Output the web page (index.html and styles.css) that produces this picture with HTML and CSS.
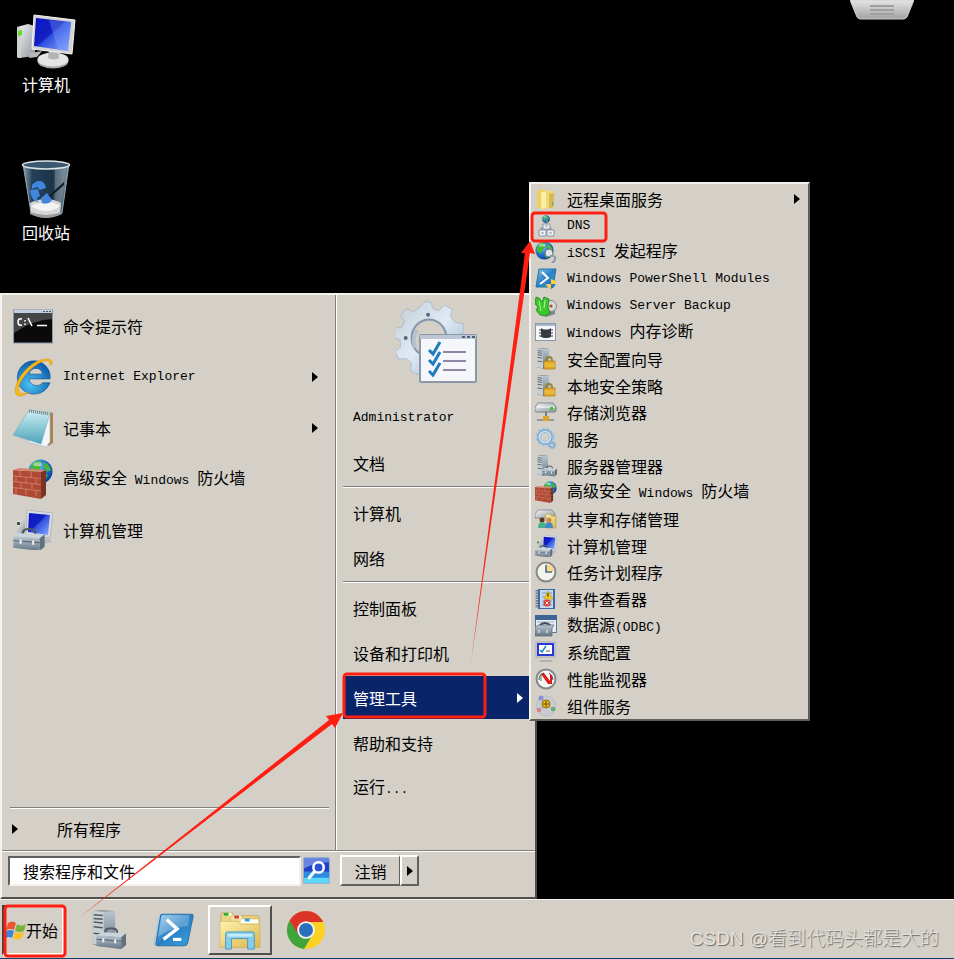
FILE: index.html
```html
<!DOCTYPE html>
<html lang="zh-CN">
<head>
    <meta charset="UTF-8">
    <meta name="viewport" content="width=device-width, initial-scale=1.0">
    <title>开始菜单 - 管理工具 - DNS</title>
    <link rel="stylesheet" href="styles.css">
</head>
<body>

    <!-- Shared icon symbols -->
    <svg class="sprites" aria-hidden="true">
        <defs>
            <linearGradient id="screen" x1="0" y1="0" x2="1" y2="1">
                <stop offset="0" stop-color="#0a16c8"/><stop offset=".45" stop-color="#1420c0"/>
                <stop offset=".5" stop-color="#3050e0"/><stop offset="1" stop-color="#8cacff"/>
            </linearGradient>
            <linearGradient id="metal" x1="0" y1="0" x2="1" y2="1">
                <stop offset="0" stop-color="#f4f5f6"/><stop offset="1" stop-color="#8f979e"/>
            </linearGradient>
            <linearGradient id="steel" x1="0" y1="0" x2="0" y2="1">
                <stop offset="0" stop-color="#b9c6d0"/><stop offset="1" stop-color="#647684"/>
            </linearGradient>
            <linearGradient id="psBlue" x1="0" y1="0" x2="1" y2="1">
                <stop offset="0" stop-color="#8ccaf0"/><stop offset=".5" stop-color="#2a80c4"/><stop offset="1" stop-color="#3aa4dc"/>
            </linearGradient>
            <linearGradient id="gold" x1="0" y1="0" x2="1" y2="1">
                <stop offset="0" stop-color="#fdf3b0"/><stop offset="1" stop-color="#dcb64a"/>
            </linearGradient>
            <linearGradient id="note" x1="0" y1="0" x2="0" y2="1">
                <stop offset="0" stop-color="#cfeef4"/><stop offset="1" stop-color="#4ca4ba"/>
            </linearGradient>
            <linearGradient id="glass" x1="0" y1="0" x2="1" y2="0">
                <stop offset="0" stop-color="#8ea2b2"/><stop offset=".2" stop-color="#24405a"/>
                <stop offset=".65" stop-color="#1e3448"/><stop offset="1" stop-color="#8496a4"/>
            </linearGradient>
            <radialGradient id="earth" cx=".35" cy=".3" r=".75">
                <stop offset="0" stop-color="#bfeaff"/><stop offset=".4" stop-color="#2f86e0"/><stop offset="1" stop-color="#0a3a94"/>
            </radialGradient>
            <radialGradient id="ieBlue" cx=".4" cy=".7" r=".7">
                <stop offset="0" stop-color="#4cc4f4"/><stop offset="1" stop-color="#0c5cac"/>
            </radialGradient>
            <linearGradient id="gearBlue" x1="0" y1="0" x2="1" y2="1">
                <stop offset="0" stop-color="#c4cdd6"/><stop offset=".5" stop-color="#dfeaf4"/><stop offset="1" stop-color="#8db0cc"/>
            </linearGradient>
        </defs>

        <symbol id="i-computer" viewBox="0 0 60 60">
            <path d="M1 15l11-3 7 2v30L3 46q-2 0-2-2z" fill="url(#metal)"/>
            <path d="M1 15l4 1v30l-2 0q-2 0-2-2z" fill="#cfd0d0"/>
            <path d="M2 19l4-1v5l-4 1z" fill="#58e020"/>
            <path d="M14 41l12-2-5 6-8 1z" fill="#b9b9b9"/>
            <ellipse cx="37" cy="49" rx="15.500" ry="7.500" fill="#a9a9a9"/>
            <ellipse cx="37" cy="47.500" rx="15.500" ry="7" fill="#e4e4e4"/>
            <path d="M33 37h9l1 9q-5 3-11 0z" fill="#b4b4b4"/>
            <path d="M18 3l41 5-3 34-40-5z" fill="#d6d4d0" stroke="#f6f6f6"/>
            <path d="M20 6l35 4-3 29-34-5z" fill="url(#screen)"/>
            <path d="M33 8l22 2-3 29-10-1z" fill="#7ea4ff" opacity=".35"/>
        </symbol>
        <symbol id="i-bin" viewBox="0 0 60 60">
            <path d="M7 4h46l-7 49q-16 8-31 0z" fill="url(#glass)" stroke="#93a4b0"/>
            <path d="M39 8h11l-6 44-6 2z" fill="#8fa0ac" opacity=".45"/>
            <path d="M30 38l18-16v3L32 39z" fill="#10202c"/>
            <path d="M14 43q16-8 31 0l-1 11q-14 7-29 0z" fill="#d6d6d6"/>
            <path d="M15 46q8-5 14-2 7-4 15 2-6 5-14 5T15 46z" fill="#f3f3f3"/>
            <path d="M14 52q16 6 32 0v2q-16 8-32 0z" fill="#9b9b9b"/>
            <path d="M16 25q5-6 11-3 3 3 3 6l-6 2-3-3-5 2zM14 30l8-1 2 7-3 2q0 4 2 5-8-2-9-13zM25 38l6-5 5 7q-3 5-10 3z" fill="#3f86dc"/>
            <ellipse cx="30" cy="5" rx="23.500" ry="4" fill="#3c5870" stroke="#dfe4e8" stroke-width="1.500"/>
        </symbol>
        <symbol id="i-cmd" viewBox="0 0 40 40">
            <rect x=".5" y="4" width="39" height="33" fill="#0a0a0a" stroke="#8a98a8"/>
            <rect x="1" y="4" width="38" height="3" fill="#c2cfdf"/>
            <path d="M30 5.500h2m1 0h2m1 0h2" stroke="#3f5878"/>
            <path d="M1 7h38v6Q20 14 1 27z" fill="#777" opacity=".55"/>
            <path d="M9 13q-4-1-4 3t4 3M12 14v1.500m0 2v1.500M15 12l4 8M24 19.500h10" fill="none" stroke="#fff" stroke-width="1.600"/>
        </symbol>
        <symbol id="i-ie" viewBox="0 0 42 42">
            <path d="M22 4a17 17 0 0 1 17 19H17q1 7 8 7 4 0 6-3h8Q34 39 22 39A17 17 0 1 1 22 4zm-5 14h14q-1-6-7-6t-7 6z" fill="url(#ieBlue)" stroke="#0b4e94" stroke-width=".6"/>
            <path d="M41 7Q42 2 35 2 20 3 8 20-1 35 4 40q4 3 13-3-8 3-10 0-4-5 5-17Q22 7 34 4q5-1 5 5z" fill="#f9b812" stroke="#d68e08" stroke-width=".5"/>
        </symbol>
        <symbol id="i-notepad" viewBox="0 0 40 40">
            <path d="M36 4l4 1v30l-5 3z" fill="#a98450"/>
            <path d="M32 4l5-1v31l-4 5-18-5z" fill="#f2f6f8" stroke="#9aabb4" stroke-width=".5"/>
            <path d="M16 2l21 3-9 31L0 27z" fill="url(#note)" stroke="#66a4b0" stroke-width=".5"/>
            <path d="M16 3l20 3" stroke="#78807f" stroke-width="3" stroke-dasharray="1 1"/>
        </symbol>
        <symbol id="i-globe" viewBox="0 0 24 24">
            <circle cx="12" cy="12" r="11.500" fill="url(#earth)"/>
            <path d="M3 6q5-6 10-4l-2 4 2 2-4 5-2 3-5-3zM15 3q6 2 7 8l-4 1-3-4zM13 14l6 1-3 7-4-3z" fill="#46b83a"/>
            <ellipse cx="9" cy="5" rx="4" ry="2" fill="#fff" opacity=".45"/>
        </symbol>
        <symbol id="i-firewall" viewBox="0 0 40 40">
            <use href="#i-globe" x="15" y="0" width="25" height="25"/>
            <path d="M28 13l5-2v25l-5 4z" fill="#793522"/>
            <path d="M0 11l28 2v27L0 35z" fill="#b04a36"/>
            <path d="M0 17l28 2.500m-28 3l28 3m-28 3l28 3.500M7 12v6m11-5v6M3 18v5m10-4v5m10-4v5M8 24v5m11-4v5M3 29v6m10-5v6m10-5v6" stroke="#d8907a" stroke-width=".7"/>
            <path d="M0 11l28 2 5-2-27-2z" fill="#d88570"/>
        </symbol>
        <symbol id="i-toolbox" viewBox="0 0 30 22">
            <path d="M9 8V5q0-4 6-4t6 4v3" fill="none" stroke="#4c5962" stroke-width="2"/>
            <path d="M0 8l6-3 24 1-5 4z" fill="#cbd4da"/>
            <path d="M25 10l5-4v12l-5 4z" fill="#60707c"/>
            <path d="M0 8l25 2v12L0 19z" fill="url(#steel)"/>
            <path d="M0 12l25 2" stroke="#536470"/>
            <path d="M6 11h2v4H6zM18 12h2v4h-2z" fill="#eef2f4"/>
        </symbol>
        <symbol id="i-manage" viewBox="0 0 40 40">
            <path d="M4 11l8-2v14H4z" fill="url(#metal)"/>
            <path d="M4 12h3v3H4z" fill="#3c5a3c"/>
            <path d="M14 0l26 3-3 25-24-3z" fill="#d8dce2" stroke="#9ba3ac" stroke-width=".6"/>
            <path d="M16 3l21 2-2 20-20-3z" fill="url(#screen)"/>
            <path d="M27 29h10l2 3-8 2z" fill="#b8bcc0"/>
            <use href="#i-toolbox" x="0" y="18" width="32" height="23"/>
        </symbol>
        <symbol id="i-gear" viewBox="0 0 70 76">
            <path fill-rule="evenodd" d="M29 1h7l2 7 6 2 6-6 8 5-2 7 5 6 8 1 1 9-7 4v8l5 6-4 9-8-1-6 6-1 8-9 3-5-6h-6l-5 7-9-4 1-8-5-5-8 1-4-8 6-5-1-7-7-3 1-9 8-1 3-6-4-6 6-7 7 3 6-4zM34 20a17 18 0 1 0 0 36 17 18 0 0 0 0-36z" fill="url(#gearBlue)" stroke="#a4b6c6" stroke-width=".8"/>
            <ellipse cx="34" cy="38" rx="18" ry="19" fill="none" stroke="#8696a8" stroke-width="2"/>
            <path d="M20 48q-4-10 2-18" fill="none" stroke="#b4c2d0" stroke-width="4"/>
            <circle cx="33" cy="14" r="2" fill="#53677c"/><circle cx="10" cy="38" r="2" fill="#53677c"/>
        </symbol>
        <symbol id="i-admin" viewBox="0 0 84 84">
            <use href="#i-gear" x="1" y="0" width="68" height="74"/>
            <rect x="25" y="34" width="56" height="47" rx="1" fill="#f6f7fa" stroke="#8c97a8" stroke-width="2"/>
            <path d="M25 34h56v4H25z" fill="#bcc7d6"/>
            <path d="M67 36h3m2 0h3m2 0h3" stroke="#4c5e78" stroke-width="2"/>
            <path d="M48 51h23M48 60h23M48 69h23" stroke="#8c87a4" stroke-width="2"/>
            <path d="M34 49l4 4 7-12M34 59l4 4 7-12M34 70l4 4 7-12" fill="none" stroke="#1c7cc0" stroke-width="3"/>
        </symbol>
        <symbol id="i-search" viewBox="0 0 26 26">
            <rect x=".5" y=".5" width="25" height="25" rx="2" fill="#2040c8" stroke="#9ab0d0"/>
            <path d="M1 14h24v11H1z" fill="#2c8ce0"/><path d="M1 20h24v5H1z" fill="#5cd8f8"/>
            <path d="M1 1h24v4Q12 5 1 11z" fill="#9ab4f4" opacity=".6"/>
            <circle cx="15" cy="10" r="5" fill="#2c50d8" stroke="#fff" stroke-width="2.400"/>
            <path d="M11 14l-5 6" stroke="#fff" stroke-width="3" stroke-linecap="round"/>
        </symbol>
        <symbol id="i-flag" viewBox="0 0 20 20">
            <path d="M2 3q4-3 8 0L8 10Q5 8 0 10z" fill="#e8582c"/>
            <path d="M11 4q4 3 9 0l-2 7q-5 2-9 0z" fill="#78b43c"/>
            <path d="M0 11q4-2 8 0l-2 7q-3-2-6 0z" fill="#3c84d8"/>
            <path d="M9 12q4 2 9 0l-2 6q-5 3-9 0z" fill="#f8c024"/>
        </symbol>
        <symbol id="i-server" viewBox="0 0 20 40" preserveAspectRatio="none">
            <path d="M0 1l8-1 12 1v36l-9 3-11-3z" fill="#8f989c"/>
            <path d="M0 1l10 1v37L0 36z" fill="#c9d0d4"/>
            <path d="M1 5l8 1M1 9l8 1M1 13l8 1M1 18l8 1M1 25l8 1" stroke="#4f5c66" stroke-width="1.600"/>
            <path d="M10 2l10-1v36l-10 2z" fill="url(#steel)"/>
        </symbol>
        <symbol id="i-srvmgr" viewBox="0 0 40 44">
            <use href="#i-server" x="3" y="0" width="25" height="41"/>
            <use href="#i-toolbox" x="7" y="19" width="33" height="24"/>
        </symbol>
        <symbol id="i-ps" viewBox="0 0 40 32">
            <path d="M0 29L5 4l3-3h4L5 31H2z" fill="#9cc4e4" opacity=".6"/>
            <path d="M9 1h27q3 0 2 3l-5 24q-1 3-4 3H5q-3 0-2-3L7 4q0-3 2-3z" fill="url(#psBlue)" stroke="#2870a8"/>
            <path d="M9 2h26l-2 10Q18 14 5 22L8 5z" fill="#fff" opacity=".25"/>
            <path d="M13 6l10 9-13 10" fill="none" stroke="#fff" stroke-width="3.200"/>
            <path d="M19 25h8" stroke="#fff" stroke-width="3"/>
        </symbol>
        <symbol id="i-explorer" viewBox="0 0 44 40">
            <path d="M2 4q0-2 2-2h10l2 3h24q2 0 2 2v31H2z" fill="#ead486" stroke="#c0a04c" stroke-width=".8"/>
            <path d="M12 7q0-2 2-2h9l2 3h17v30H12z" fill="#f1de94" stroke="#c8ac58" stroke-width=".6"/>
            <path d="M23 9h18v4H23z" fill="#fff"/>
            <path d="M5 2h8v3H5zM15 5h8v3h-8z" fill="#fff"/>
            <path d="M5 2h5v3H5z" fill="#22b422"/><path d="M16 5h5v3h-5z" fill="#d83c28"/><path d="M27 8h5v3h-5z" fill="#2c9ce4"/>
            <path d="M1 11h19l2 3h21v24H1z" fill="url(#gold)" stroke="#ceb058" stroke-width=".6"/>
            <path d="M7 40V24q0-2 2-2h26q2 0 2 2v16h-7V29H13v11z" fill="#86cdec" stroke="#4898c4"/>
            <path d="M9 24h26v3H9z" fill="#d4f2fc" opacity=".8"/>
        </symbol>
        <symbol id="i-chrome" viewBox="0 0 40 40">
            <circle cx="20" cy="20" r="19" fill="#fcd124"/>
            <path d="M3.500 10.500A19 19 0 0 0 18 39l9-15-14 0z" fill="#40a43c"/>
            <path d="M3.500 10.500L12 24l8-12h17.200l-.7-1.500a19 19 0 0 0-33 0z" fill="#dc3228"/>
            <circle cx="20" cy="20" r="8.800" fill="#f4f4f0"/>
            <circle cx="20" cy="20" r="7" fill="#2c70bc"/>
        </symbol>

        <!-- 22px menu icons -->
        <symbol id="i-folder" viewBox="0 0 22 22">
            <path d="M2 3l5-2 4 2v17l-5 1-4-2z" fill="#ecd060"/>
            <path d="M11 3l5-1 3 3v14l-6 2-3-1z" fill="#f0d878"/>
            <path d="M6 4l5-1v17l-5 1z" fill="#fbeea8"/><path d="M14 6l5-1v14l-5 1z" fill="#d8b850"/>
            <path d="M17 14h1v3h-1z" fill="#48a8c8"/>
        </symbol>
        <symbol id="i-dns" viewBox="0 0 22 22">
            <path d="M11 7v4M6 16v-3h10v3" stroke="#788898" fill="none"/>
            <use href="#i-globe" x="7" y="0" width="8" height="8"/>
            <path d="M8 9h7v5H8zM4 15h7v6H4zM12 15h7v6h-7z" fill="#eef1f6" stroke="#8793a4"/>
            <path d="M10 11h3M6 18h3M14 18h3" stroke="#8793a4"/>
        </symbol>
        <symbol id="i-iscsi" viewBox="0 0 22 22">
            <use href="#i-globe" x="0" y="0" width="19" height="19"/>
            <circle cx="14" cy="12" r="4" fill="#dfe5ea" stroke="#68747e"/>
            <path d="M15 15q6-1 5 3t-3 3" fill="none" stroke="#8a98a2" stroke-width="2"/>
        </symbol>
        <symbol id="i-shield" viewBox="0 0 10 10">
            <path d="M5 0l5 2q0 6-5 8Q0 8 0 2z" fill="#2c74d0"/>
            <path d="M5 0l5 2v3H5zM5 5v5Q1 9 0 5z" fill="#f8d434"/>
        </symbol>
        <symbol id="i-psmod" viewBox="0 0 22 22">
            <path d="M4 1h17l-3 18H1z" fill="url(#psBlue)" stroke="#2870a8"/>
            <path d="M7 4l6 6-8 6" fill="none" stroke="#fff" stroke-width="2"/>
            <use href="#i-shield" x="11" y="11" width="10" height="10"/>
        </symbol>
        <symbol id="i-backup" viewBox="0 0 22 22">
            <path d="M7 13l13-2v8l-9 3-4-3z" fill="#7c868c"/>
            <circle cx="16" cy="11" r="5.500" fill="#d6d8da" stroke="#888"/><circle cx="16" cy="11" r="1.600" fill="#a0522c"/>
            <path d="M1 2l3 1 3 4 2-5 5 2-1 8 2 6-5 3-5-1-4-5 2-3-3-3z" fill="#3cc82c" stroke="#1c8818" stroke-width=".8"/>
            <path d="M4 6l2 10M10 5l-1 8" stroke="#b4f4a0" fill="none"/>
        </symbol>
        <symbol id="i-memory" viewBox="0 0 22 22">
            <rect x=".5" y="2.500" width="20" height="17" fill="#f6f7f8" stroke="#8a98a8"/>
            <path d="M1 3h19v2H1z" fill="#a8b8cc"/>
            <path d="M6 7l3 2h4l3-2v9l-3 1H9l-3-1z" fill="#383c40"/>
            <path d="M4 9h14M4 12h14M4 15h14" stroke="#383c40"/>
        </symbol>
        <symbol id="i-lock" viewBox="0 0 22 22">
            <use href="#i-server" x="2" y="0" width="12" height="21"/>
            <path d="M11 14v-2q0-3 3-3t3 3v2" fill="none" stroke="#98803c" stroke-width="1.800"/>
            <rect x="9" y="13" width="11" height="8" fill="#e4a824" stroke="#a87c14" stroke-width=".7"/>
            <path d="M9 16h11M9 18h11" stroke="#f8d870" stroke-width=".6"/>
        </symbol>
        <symbol id="i-storage" viewBox="0 0 22 22">
            <path d="M3 2h15l3 4v4q0 1-2 1H2q-2 0-2-1V6z" fill="url(#metal)" stroke="#68727a" stroke-width=".8"/>
            <path d="M2 6h18" stroke="#fff"/><path d="M15 6h3v3h-3z" fill="#38c828"/>
            <path d="M11 11v6" stroke="#707c84" stroke-width="2"/><path d="M2 19h17" stroke="#7c8890" stroke-width="1.500"/>
            <rect x="8" y="15" width="6" height="5" fill="#e0a428"/>
        </symbol>
        <symbol id="i-services" viewBox="0 0 22 22">
            <circle cx="10" cy="9" r="6" fill="none" stroke="#7eabcf" stroke-width="4"/>
            <circle cx="10" cy="9" r="8.500" fill="none" stroke="#9cc0dc" stroke-width="2" stroke-dasharray="2.600 2"/>
            <circle cx="10" cy="9" r="5.500" fill="none" stroke="#d0e4f2" stroke-width="1.600"/>
            <circle cx="17" cy="17" r="2.500" fill="none" stroke="#8cb4d0" stroke-width="2.500"/>
            <circle cx="17" cy="17" r="4" fill="none" stroke="#a8c8de" stroke-dasharray="1.500 1.500"/>
        </symbol>
        <symbol id="i-srvtool" viewBox="0 0 22 22">
            <use href="#i-server" x="2" y="0" width="11" height="21"/>
            <use href="#i-toolbox" x="7" y="10" width="15" height="12"/>
        </symbol>
        <symbol id="i-share" viewBox="0 0 22 22">
            <path d="M3 2h14l3 4v4H0V6z" fill="url(#metal)" stroke="#7c868e" stroke-width=".8"/>
            <path d="M11 6h4l1 2h5v12H11z" fill="url(#gold)" stroke="#c09c40" stroke-width=".7"/>
            <circle cx="7" cy="12" r="2.500" fill="#5a3a1c"/><circle cx="14" cy="12" r="2.500" fill="#c8894c"/>
            <path d="M3 20q0-6 4-6t4 6z" fill="#46b088"/><path d="M10 20q0-6 4-6t4 6z" fill="#4488c4"/>
        </symbol>
        <symbol id="i-clock" viewBox="0 0 22 22">
            <circle cx="11" cy="11" r="9.500" fill="#f3f3ee" stroke="#83888c" stroke-width="2"/>
            <path d="M11 11V3a8 8 0 0 1 8 8z" fill="#f8d890"/>
            <path d="M11 4v7h6" fill="none" stroke="#4c6880" stroke-width="1.600"/>
        </symbol>
        <symbol id="i-event" viewBox="0 0 22 22">
            <rect x="3" y="1" width="17" height="20" fill="#3c68a8"/>
            <path d="M5 2h13v18H5z" fill="#c6d8ee"/>
            <path d="M2 2v18" stroke="#6c7888" stroke-width="3" stroke-dasharray="1.500 1"/>
            <path d="M7 5h10M7 9h10M7 13h10M7 17h10" stroke="#7c98c0"/>
            <path d="M13 3l5 8H9z" fill="#f8d024" stroke="#b8920c" stroke-width=".6"/><path d="M13 5v4" stroke="#222"/>
            <circle cx="12" cy="15" r="3.600" fill="#dc3c34"/><path d="M10.500 13.500l3 3m0-3l-3 3" stroke="#fff"/>
        </symbol>
        <symbol id="i-odbc" viewBox="0 0 22 22">
            <rect x=".5" y=".5" width="21" height="17" fill="#e8eef4" stroke="#5878a0"/>
            <path d="M0 0h22v5H0z" fill="#3c6494"/><path d="M2 7h17" stroke="#9cb0c8"/>
            <path d="M4 11q6-6 12 0" fill="none" stroke="#444f58" stroke-width="2"/>
            <path d="M0 12l4-2h15l-2 3v8H0z" fill="url(#steel)" stroke="#586874" stroke-width=".7"/>
            <path d="M4 15v3M12 15v3" stroke="#fff"/>
        </symbol>
        <symbol id="i-config" viewBox="0 0 22 22">
            <path d="M6 19h10l2 2H4z" fill="#b0b2b4"/>
            <rect x="1" y="1" width="19" height="15" fill="#dcdcde" stroke="#a4a8b0"/>
            <rect x="3" y="3" width="15" height="11" fill="#fff" stroke="#2838d4" stroke-width="2"/>
            <path d="M5 9l2 2 4-6" fill="none" stroke="#1c8cc4" stroke-width="1.600"/><path d="M11 10h4" stroke="#555"/>
        </symbol>
        <symbol id="i-perf" viewBox="0 0 22 22">
            <circle cx="11" cy="11" r="9.500" fill="#f6f6f4" stroke="#83888c" stroke-width="2"/>
            <path d="M4 12q0-6 5-7M14 5q4 2 4 7" stroke="#546" fill="none"/>
            <path d="M6 6l3-1 6 8V7h2v9h-4z" fill="#dc1c1c"/><path d="M6 6v7" stroke="#3a8c3a"/>
        </symbol>
        <symbol id="i-component" viewBox="0 0 22 22">
            <circle cx="11" cy="11" r="10" fill="#c8cbd0" stroke="#b2b4ba" stroke-width=".6"/>
            <circle cx="6" cy="3" r="2.500" fill="#8c8cd8"/><circle cx="4" cy="15" r="2.200" fill="#e07c88"/><circle cx="18" cy="14" r="2.200" fill="#58b058"/>
            <path d="M6 3l5 6-7 6m7-6l7 5" stroke="#a4a4ac" fill="none"/>
            <circle cx="11" cy="9" r="4" fill="#e8b81c" stroke="#94700c"/><path d="M11 6v6M8 9h6" stroke="#6c500c"/>
        </symbol>
    </svg>

    <main class="desktop">
        <div class="desktop-icon">
            <svg><use href="#i-computer"/></svg>
            <span>计算机</span>
        </div>
        <div class="desktop-icon">
            <svg><use href="#i-bin"/></svg>
            <span>回收站</span>
        </div>

        <svg class="session-tab" viewBox="0 0 64 20">
            <defs>
                <linearGradient id="tab" x1="0" y1="0" x2="0" y2="1">
                    <stop offset="0" stop-color="#e6e6e6"/><stop offset="1" stop-color="#a2a2a2"/>
                </linearGradient>
            </defs>
            <path d="M0 0h64l-7 17q-1 2-4 2H11q-3 0-4-2z" fill="url(#tab)" stroke="#d0d0d0"/>
            <path d="M20 6h24M20 10h24M20 14h24" stroke="#a0a0a0" stroke-width="2"/>
        </svg>

        <!-- Start menu -->
        <nav class="start-menu">
            <div class="columns">
                <div class="programs">
                    <a href="#" class="program"><svg><use href="#i-cmd"/></svg><span>命令提示符</span></a>
                    <a href="#" class="program more"><svg><use href="#i-ie"/></svg><span class="en">Internet Explorer</span></a>
                    <a href="#" class="program more"><svg><use href="#i-notepad"/></svg><span>记事本</span></a>
                    <a href="#" class="program"><svg><use href="#i-firewall"/></svg><span>高级安全<span class="en"> Windows </span>防火墙</span></a>
                    <a href="#" class="program"><svg><use href="#i-manage"/></svg><span>计算机管理</span></a>
                    <a href="#" class="all-programs">所有程序</a>
                </div>

                <div class="places">
                    <svg class="avatar"><use href="#i-admin"/></svg>
                    <a href="#" class="place"><span class="en">Administrator</span></a>
                    <a href="#" class="place">文档</a>
                    <hr>
                    <a href="#" class="place">计算机</a>
                    <a href="#" class="place">网络</a>
                    <hr>
                    <a href="#" class="place">控制面板</a>
                    <a href="#" class="place">设备和打印机</a>
                    <a href="#" class="place more active">管理工具</a>
                    <a href="#" class="place">帮助和支持</a>
                    <a href="#" class="place"><span>运行<span class="en">...</span></span></a>
                </div>
            </div>

            <div class="menu-footer">
                <input type="text" class="search" placeholder="搜索程序和文件" aria-label="搜索程序和文件">
                <button class="search-button" aria-label="搜索"><svg><use href="#i-search"/></svg></button>
                <button class="logoff">注销</button>
                <button class="logoff-more more" aria-label="更多"></button>
            </div>

            <!-- Administrative tools -->
            <div class="submenu">
                <a href="#" class="more"><svg><use href="#i-folder"/></svg><span>远程桌面服务</span></a>
                <a href="#"><svg><use href="#i-dns"/></svg><span class="en">DNS</span></a>
                <a href="#"><svg><use href="#i-iscsi"/></svg><span><span class="en">iSCSI </span>发起程序</span></a>
                <a href="#"><svg><use href="#i-psmod"/></svg><span class="en">Windows PowerShell Modules</span></a>
                <a href="#"><svg><use href="#i-backup"/></svg><span class="en">Windows Server Backup</span></a>
                <a href="#"><svg><use href="#i-memory"/></svg><span><span class="en">Windows </span>内存诊断</span></a>
                <a href="#"><svg><use href="#i-lock"/></svg><span>安全配置向导</span></a>
                <a href="#"><svg><use href="#i-lock"/></svg><span>本地安全策略</span></a>
                <a href="#"><svg><use href="#i-storage"/></svg><span>存储浏览器</span></a>
                <a href="#"><svg><use href="#i-services"/></svg><span>服务</span></a>
                <a href="#"><svg><use href="#i-srvtool"/></svg><span>服务器管理器</span></a>
                <a href="#"><svg><use href="#i-firewall"/></svg><span>高级安全<span class="en"> Windows </span>防火墙</span></a>
                <a href="#"><svg><use href="#i-share"/></svg><span>共享和存储管理</span></a>
                <a href="#"><svg><use href="#i-manage"/></svg><span>计算机管理</span></a>
                <a href="#"><svg><use href="#i-clock"/></svg><span>任务计划程序</span></a>
                <a href="#"><svg><use href="#i-event"/></svg><span>事件查看器</span></a>
                <a href="#"><svg><use href="#i-odbc"/></svg><span>数据源<span class="en">(ODBC)</span></span></a>
                <a href="#"><svg><use href="#i-config"/></svg><span>系统配置</span></a>
                <a href="#"><svg><use href="#i-perf"/></svg><span>性能监视器</span></a>
                <a href="#"><svg><use href="#i-component"/></svg><span>组件服务</span></a>
            </div>
        </nav>
    </main>

    <footer class="taskbar">
        <button class="start-button"><svg><use href="#i-flag"/></svg>开始</button>
        <button class="task" aria-label="服务器管理器"><svg><use href="#i-srvmgr"/></svg></button>
        <button class="task" aria-label="PowerShell"><svg><use href="#i-ps"/></svg></button>
        <button class="task open" aria-label="资源管理器"><svg><use href="#i-explorer"/></svg></button>
        <button class="task" aria-label="Chrome"><svg><use href="#i-chrome"/></svg></button>
        <span class="watermark">CSDN @看到代码头都是大的</span>
    </footer>

    <!-- Red boxes and arrows -->
    <svg class="marks" viewBox="0 0 954 959">
        <g fill="none" stroke="#ff1e12" stroke-width="3">
            <rect x="5" y="906" width="60" height="50" rx="3"/>
            <rect x="344" y="674" width="141" height="43" rx="3"/>
            <rect x="532" y="213" width="74" height="28" rx="3"/>
        </g>
        <g fill="#ff1e12">
            <path d="M76 920L329 720l-3-4 17-3-8 15-3-4z"/>
            <path d="M471 662L525 253l-4 0 9-12 5 13-5-1z"/>
        </g>
    </svg>

</body>
</html>
```
FILE: styles.css
```css
* {
    margin: 0;
    padding: 0;
    box-sizing: border-box;
}

body {
    font-family: "Noto Sans CJK SC", sans-serif;
    font-size: 16px;
    line-height: 24px;
    background: #000;
    color: #000;
    display: flex;
    flex-direction: column;
    min-height: 100vh;
    position: relative;
    overflow-x: hidden;
}

a {
    color: inherit;
    text-decoration: none;
}

button,
input {
    font: inherit;
    color: inherit;
    background: #d4d0c8;
}

svg {
    display: block;
    flex: none;
}

.sprites {
    position: absolute;
    width: 0;
    height: 0;
}

/* Latin text, half the width of a Chinese character */
.en {
    font-family: "Liberation Mono", monospace;
    font-size: 13px;
    white-space: pre;
}

/* Desktop */
.desktop {
    flex: 1;
    position: relative;
    display: flex;
    flex-direction: column;
    gap: 64px;
    padding: 12px 6px;
}

.desktop-icon {
    width: 80px;
    display: flex;
    flex-direction: column;
    align-items: center;
    color: #fff;
}

.desktop-icon svg {
    width: 60px;
    height: 60px;
}

.session-tab {
    position: absolute;
    top: 0;
    right: 40px;
    width: 64px;
    height: 20px;
}

/* Start menu */
.start-menu {
    position: absolute;
    left: 0;
    bottom: 0;
    width: 537px;
    background: #d4d0c8;
    border: 2px solid;
    border-color: #f4f2ee #504e4a #504e4a #f4f2ee;
}

.columns {
    display: flex;
    border-bottom: 1px solid #808080;
    box-shadow: 0 1px #fff;
}

.programs {
    flex: 1;
    display: flex;
    flex-direction: column;
    padding: 5px 6px 0 8px;
    border-right: 1px solid #808080;
}

.program {
    display: flex;
    align-items: center;
    gap: 10px;
    height: 51px;
    padding: 0 11px 0 3px;
}

.program svg {
    width: 40px;
    height: 40px;
}

.more::after {
    content: "";
    margin-left: auto;
    border: 5px solid transparent;
    border-left: 6px solid;
    border-right: 0;
}

.all-programs {
    display: flex;
    align-items: center;
    height: 43px;
    margin-top: auto;
    border-top: 1px solid #808080;
    box-shadow: inset 0 1px #fff;
}

.all-programs::before {
    content: "";
    margin: 0 39px 0 2px;
    border: 5px solid transparent;
    border-left: 6px solid;
    border-right: 0;
}

.places {
    width: 199px;
    display: flex;
    flex-direction: column;
    gap: 2px;
    padding: 6px 6px 41px;
    border-left: 1px solid #fff;
}

.avatar {
    width: 84px;
    height: 84px;
    margin: 0 auto 9px 52px;
}

.place {
    display: flex;
    align-items: center;
    height: 43px;
    padding: 0 6px 0 10px;
}

.place.active {
    background: #0a246a;
    color: #fff;
}

.places hr {
    border: 0;
    border-top: 1px solid #808080;
    border-bottom: 1px solid #fff;
    margin-bottom: 1px;
}

.menu-footer {
    display: flex;
    align-items: center;
    padding: 4px 6px 11px;
}

.search {
    width: 293px;
    height: 30px;
    padding: 0 13px;
    background: #fff;
    border: 2px solid;
    border-color: #606060 #f4f2ee #f4f2ee #606060;
}

.search::placeholder {
    color: #000;
    opacity: 1;
}

.search-button {
    margin: 0 10px 0 2px;
    border: 0;
}

.search-button svg {
    width: 27px;
    height: 27px;
}

.logoff,
.logoff-more {
    height: 31px;
    border: 2px solid;
    border-color: #fff #606060 #606060 #fff;
}

.logoff {
    width: 60px;
    border-right-width: 1px;
}

.logoff-more {
    display: flex;
    align-items: center;
    width: 19px;
    padding: 0 5px;
}

/* Administrative tools menu */
.submenu {
    position: absolute;
    left: 527px;
    bottom: 176px;
    width: 281px;
    padding: 1px 0 0;
    background: #d4d0c8;
    border: 2px solid;
    border-color: #f4f2ee #605e5a #605e5a #f4f2ee;
}

.submenu a {
    display: flex;
    align-items: center;
    gap: 10px;
    height: 27px;
    padding: 0 8px 0 4px;
}

.submenu a:nth-child(3n) {
    height: 26px;
}

.submenu svg {
    width: 22px;
    height: 22px;
}

/* Taskbar */
.taskbar {
    display: flex;
    align-items: center;
    gap: 2px;
    height: 60px;
    padding: 2px 15px 0 2px;
    background: #d4d0c8;
    border-top: 1px solid #f4f2ee;
    border-bottom: 1px solid #1c3c6c;
}

.start-button {
    display: flex;
    align-items: center;
    width: 62px;
    height: 50px;
    margin-right: 10px;
    padding: 0 2px;
    border: 2px solid;
    border-color: #404040 #fff #fff #404040;
}

.start-button svg {
    width: 20px;
    height: 20px;
}

.task {
    display: flex;
    align-items: center;
    justify-content: center;
    width: 64px;
    height: 50px;
    border: 2px solid transparent;
}

.task svg {
    width: 42px;
    height: 40px;
}

.task.open {
    border-color: #fff #505050 #505050 #fff;
}

.watermark {
    margin-left: auto;
    padding-top: 18px;
    font-family: "Liberation Sans", "Noto Sans CJK SC", sans-serif;
    font-size: 19px;
    font-weight: 300;
    color: #e4e2de;
    text-shadow: 1px 1px 1px #666;
    white-space: nowrap;
}

/* Red boxes and arrows */
.marks {
    position: absolute;
    left: 0;
    bottom: 0;
    width: 954px;
    height: 959px;
    pointer-events: none;
}
```
